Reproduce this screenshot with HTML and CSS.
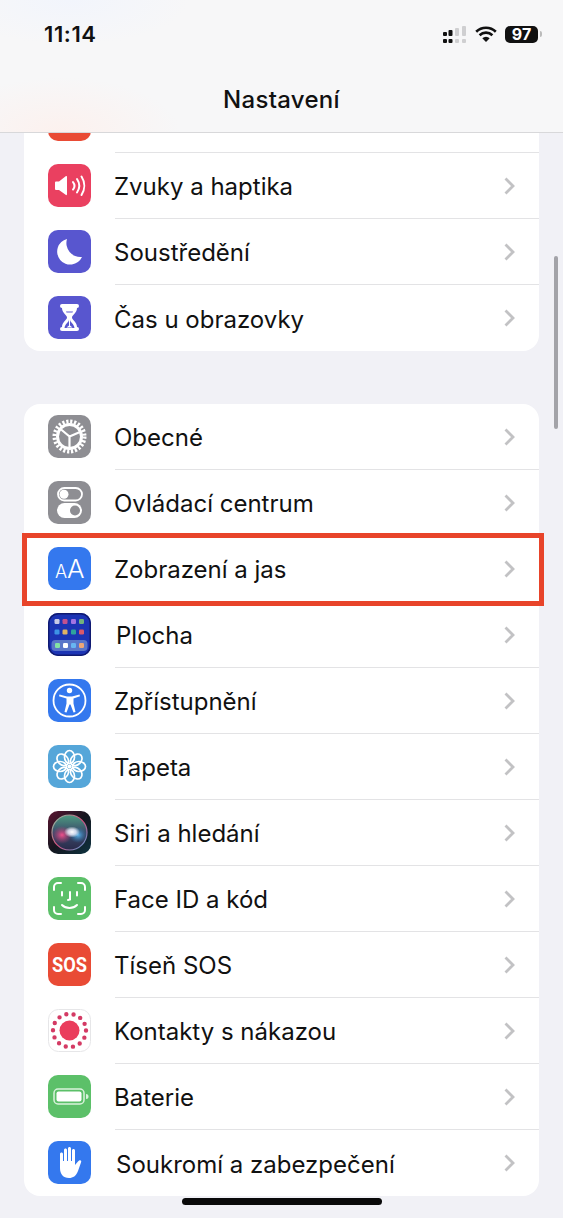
FILE: index.html
```html
<!DOCTYPE html>
<html lang="cs">
<head>
    <meta charset="UTF-8">
    <meta name="viewport" content="width=device-width, initial-scale=1.0">
    <title>Nastavení</title>
    <link rel="stylesheet" href="styles.css">
</head>
<body>
    <div class="screen">
        <!-- Horní lišta -->
        <header class="top-bar">
            <div class="status">
                <span class="time">11:14</span>
                <div class="status-icons">
                    <svg class="signal" width="23" height="17" viewBox="0 0 23 17">
                        <g fill="#111">
                            <rect x="0" y="6" width="4" height="4" rx="1"/>
                            <rect x="0" y="13" width="4" height="4" rx="1"/>
                            <rect x="5.5" y="4" width="4" height="6" rx="1"/>
                            <rect x="5.5" y="13" width="4" height="4" rx="1"/>
                        </g>
                        <g fill="#cfcfd1">
                            <rect x="12" y="2" width="4" height="8" rx="1"/>
                            <rect x="12" y="13" width="4" height="4" rx="1"/>
                            <rect x="19" y="0" width="4" height="10" rx="1"/>
                            <rect x="19" y="13" width="4" height="4" rx="1"/>
                        </g>
                    </svg>
                    <svg class="wifi" width="22" height="16" viewBox="0 0 22 16">
                        <path d="M1.2 5.8a14 14 0 0 1 19.600 0M4.600 9.200a9.200 9.200 0 0 1 12.800 0" fill="none" stroke="#111" stroke-width="2.600"/>
                        <path d="M7.300 12.300a5.200 5.200 0 0 1 7.400 0L11 16z" fill="#111"/>
                    </svg>
                    <div class="battery"><span>97</span></div>
                    <i class="battery-nub"></i>
                </div>
            </div>
            <h1>Nastavení</h1>
        </header>

        <!-- První skupina -->
        <section class="card">
            <div class="row">
                <svg class="icon" viewBox="0 0 43 43"><rect width="43" height="43" rx="10" fill="#e94b35"/></svg>
                <div class="row-body"></div>
            </div>
            <div class="row">
                <svg class="icon" viewBox="0 0 43 43">
                    <rect width="43" height="43" rx="10" fill="#ea4060"/>
                    <path d="M7 18.500q0-1 1-1h3L18 12q1-.5 1 1v17q0 1.500-1 1l-7-5H8q-1 0-1-1z" fill="#fff"/>
                    <path d="M25 18a6 6 0 0 1 0 7.500M29 15a12 12 0 0 1 0 13.500M33.500 12.500a17 17 0 0 1 0 18.500" fill="none" stroke="#fff" stroke-width="2" stroke-linecap="round"/>
                </svg>
                <div class="row-body"><span>Zvuky a haptika</span><svg class="chevron" viewBox="0 0 11 18"><path d="M1.500 1.500 9 9l-7.500 7.500"/></svg></div>
            </div>
            <div class="row">
                <svg class="icon" viewBox="0 0 43 43">
                    <rect width="43" height="43" rx="10" fill="#5856cf"/>
                    <path d="M19 9a13 13 0 1 0 15 18A14 14 0 0 1 19 9z" fill="#fff"/>
                </svg>
                <div class="row-body"><span>Soustředění</span><svg class="chevron" viewBox="0 0 11 18"><path d="M1.500 1.500 9 9l-7.500 7.500"/></svg></div>
            </div>
            <div class="row">
                <svg class="icon" viewBox="0 0 43 43">
                    <rect width="43" height="43" rx="10" fill="#5856cf"/>
                    <path d="M14 8h15q2 0 2 2t-2 2c0 5-5 7-5 9.500s5 4.500 5 9.500q2 0 2 2t-2 2H14q-2 0-2-2t2-2c0-5 5-7 5-9.500S14 17 14 12q-2 0-2-2t2-2z" fill="#fff"/>
                    <path d="M18 15.500h7l-.5 1h-6z" fill="#5856cf"/>
                    <path d="M21 23.500c0 3-4 4-4.500 8.500h10c-.5-4.500-4.500-5.500-4.500-8.500v6l2.500 2h-6l2.500-2z" fill="#5856cf"/>
                </svg>
                <div class="row-body"><span>Čas u obrazovky</span><svg class="chevron" viewBox="0 0 11 18"><path d="M1.500 1.500 9 9l-7.500 7.500"/></svg></div>
            </div>
        </section>

        <!-- Druhá skupina -->
        <section class="card">
            <div class="row">
                <svg class="icon" viewBox="0 0 43 43">
                    <rect width="43" height="43" rx="10" fill="#8e8e93"/>
                    <circle cx="21.500" cy="21.500" r="15" fill="none" stroke="#fff" stroke-width="4" stroke-dasharray="2.200 1.740"/>
                    <circle cx="21.500" cy="21.500" r="12" fill="none" stroke="#fff" stroke-width="3"/>
                    <path d="M21.500 21.500V33M21.500 21.500 12.500 14M21.500 21.500 32 17" stroke="#fff" stroke-width="2.200" fill="none"/>
                </svg>
                <div class="row-body"><span>Obecné</span><svg class="chevron" viewBox="0 0 11 18"><path d="M1.500 1.500 9 9l-7.500 7.500"/></svg></div>
            </div>
            <div class="row">
                <svg class="icon" viewBox="0 0 43 43">
                    <rect width="43" height="43" rx="10" fill="#8e8e93"/>
                    <rect x="10" y="7" width="24" height="12.500" rx="6.250" fill="none" stroke="#fff" stroke-width="1.800"/>
                    <circle cx="16" cy="13.250" r="4.500" fill="#fff"/>
                    <rect x="9" y="22" width="25" height="15" rx="7.500" fill="#fff"/>
                    <circle cx="27" cy="29.500" r="5" fill="#8e8e93"/>
                </svg>
                <div class="row-body"><span>Ovládací centrum</span><svg class="chevron" viewBox="0 0 11 18"><path d="M1.500 1.500 9 9l-7.500 7.500"/></svg></div>
            </div>
            <div class="row">
                <svg class="icon" viewBox="0 0 43 43">
                    <rect width="43" height="43" rx="10" fill="#3478ee"/>
                    <text x="7" y="30.500" class="aa-small">A</text>
                    <text x="19" y="30.500" class="aa-big">A</text>
                </svg>
                <div class="row-body"><span>Zobrazení a jas</span><svg class="chevron" viewBox="0 0 11 18"><path d="M1.500 1.500 9 9l-7.500 7.500"/></svg></div>
                <div class="highlight"></div>
            </div>
            <div class="row">
                <svg class="icon" viewBox="0 0 43 43">
                    <rect width="43" height="43" rx="10" fill="#1c34b4"/>
                    <rect x=".75" y=".75" width="41.500" height="41.500" rx="9.500" fill="none" stroke="#101a70" stroke-width="1.500"/>
                    <rect x="6.500" y="6" width="5" height="5" rx="1.200" fill="#c9c9e6"/>
                    <rect x="14.500" y="6" width="5" height="5" rx="1.200" fill="#c2518e"/>
                    <rect x="23" y="6" width="5" height="5" rx="1.200" fill="#a274e2"/>
                    <rect x="31" y="6" width="5" height="5" rx="1.200" fill="#73b27c"/>
                    <rect x="6.500" y="16.500" width="5" height="5" rx="1.200" fill="#3d93e6"/>
                    <rect x="14.500" y="16.500" width="5" height="5" rx="1.200" fill="#e2b365"/>
                    <rect x="23" y="16.500" width="5" height="5" rx="1.200" fill="#2fa39c"/>
                    <rect x="31" y="16.500" width="5" height="5" rx="1.200" fill="#d9596a"/>
                    <rect x="3.500" y="27" width="36" height="11" rx="4" fill="#5a76c9"/>
                    <rect x="7" y="30" width="5" height="5" rx="1.200" fill="#84e3a3"/>
                    <rect x="15" y="30" width="5" height="5" rx="1.200" fill="#fff"/>
                    <rect x="23" y="30" width="5" height="5" rx="1.200" fill="#68b6f2"/>
                    <rect x="31" y="30" width="5" height="5" rx="1.200" fill="#eda777"/>
                </svg>
                <div class="row-body indent"><span>Plocha</span><svg class="chevron" viewBox="0 0 11 18"><path d="M1.500 1.500 9 9l-7.500 7.500"/></svg></div>
            </div>
            <div class="row">
                <svg class="icon" viewBox="0 0 43 43">
                    <rect width="43" height="43" rx="10" fill="#3478ee"/>
                    <circle cx="21.500" cy="21.500" r="16" fill="none" stroke="#fff" stroke-width="1.800"/>
                    <circle cx="21.500" cy="11.500" r="2.700" fill="#fff"/>
                    <path d="M11.500 15.500 19 17.500h5l7.500-2 .5 1.800-6.500 2.200v5l2 8.500-2 .5-3-8h-1l-3 8-2-.5 2-8.500v-5L11 17.300z" fill="#fff"/>
                </svg>
                <div class="row-body"><span>Zpřístupnění</span><svg class="chevron" viewBox="0 0 11 18"><path d="M1.500 1.500 9 9l-7.500 7.500"/></svg></div>
            </div>
            <div class="row">
                <svg class="icon" viewBox="0 0 43 43">
                    <rect width="43" height="43" rx="10" fill="#55a6d9"/>
                    <g fill="none" stroke="#fff" stroke-width="1.700">
                        <ellipse cx="21.500" cy="12" rx="5" ry="6.500"/>
                        <ellipse cx="21.500" cy="31" rx="5" ry="6.500"/>
                        <ellipse cx="12" cy="21.500" rx="6.500" ry="5"/>
                        <ellipse cx="31" cy="21.500" rx="6.500" ry="5"/>
                        <ellipse cx="21.500" cy="12" rx="5" ry="6.500" transform="rotate(45 21.500 21.500)"/>
                        <ellipse cx="21.500" cy="31" rx="5" ry="6.500" transform="rotate(45 21.500 21.500)"/>
                        <ellipse cx="12" cy="21.500" rx="6.500" ry="5" transform="rotate(45 21.500 21.500)"/>
                        <ellipse cx="31" cy="21.500" rx="6.500" ry="5" transform="rotate(45 21.500 21.500)"/>
                    </g>
                    <circle cx="21.500" cy="21.500" r="2" fill="#fff"/>
                </svg>
                <div class="row-body"><span>Tapeta</span><svg class="chevron" viewBox="0 0 11 18"><path d="M1.500 1.500 9 9l-7.500 7.500"/></svg></div>
            </div>
            <div class="row">
                <svg class="icon" viewBox="0 0 43 43">
                    <defs>
                        <linearGradient id="siriBg" x1="0" y1="0" x2="1" y2="1">
                            <stop offset="0" stop-color="#5a1530"/>
                            <stop offset=".5" stop-color="#14161f"/>
                            <stop offset="1" stop-color="#0e3340"/>
                        </linearGradient>
                        <linearGradient id="siriOrb" x1="0" y1="0" x2="0" y2="1">
                            <stop offset="0" stop-color="#4d9b80"/>
                            <stop offset=".5" stop-color="#3a4a6a"/>
                            <stop offset="1" stop-color="#2a2a4a"/>
                        </linearGradient>
                        <linearGradient id="siriRim" x1="0" y1="0" x2="1" y2="1">
                            <stop offset="0" stop-color="#7fd0a8"/>
                            <stop offset=".5" stop-color="#d9507f"/>
                            <stop offset="1" stop-color="#4fa0d8"/>
                        </linearGradient>
                        <radialGradient id="siriRed"><stop offset="0" stop-color="#f0508c"/><stop offset="1" stop-color="#c03a70" stop-opacity="0"/></radialGradient>
                        <radialGradient id="siriBlue"><stop offset="0" stop-color="#5fb4ec"/><stop offset="1" stop-color="#2a7ab0" stop-opacity="0"/></radialGradient>
                        <radialGradient id="siriCore"><stop offset="0" stop-color="#fff"/><stop offset=".5" stop-color="#f0f0ff" stop-opacity=".8"/><stop offset="1" stop-color="#fff" stop-opacity="0"/></radialGradient>
                    </defs>
                    <rect width="43" height="43" rx="10" fill="url(#siriBg)"/>
                    <circle cx="21.500" cy="21.500" r="17.500" fill="url(#siriOrb)" stroke="url(#siriRim)" stroke-width="1.200"/>
                    <ellipse cx="14" cy="24" rx="10" ry="9" fill="url(#siriRed)"/>
                    <ellipse cx="30" cy="24" rx="9" ry="8" fill="url(#siriBlue)"/>
                    <ellipse cx="24" cy="21" rx="8" ry="5.500" fill="url(#siriCore)"/>
                </svg>
                <div class="row-body"><span>Siri a hledání</span><svg class="chevron" viewBox="0 0 11 18"><path d="M1.500 1.500 9 9l-7.500 7.500"/></svg></div>
            </div>
            <div class="row">
                <svg class="icon" viewBox="0 0 43 43">
                    <rect width="43" height="43" rx="10" fill="#5cc069"/>
                    <g fill="none" stroke="#fff" stroke-width="2" stroke-linecap="round">
                        <path d="M6 13V10a4 4 0 0 1 4-4h3M30 6h3a4 4 0 0 1 4 4v3M37 30v3a4 4 0 0 1-4 4h-3M13 37h-3a4 4 0 0 1-4-4v-3"/>
                        <path d="M14 15v3.500M29 15v3.500M22 15v7.500l-2 .5M14 28c4 4 11 4 15 0"/>
                    </g>
                </svg>
                <div class="row-body"><span>Face ID a kód</span><svg class="chevron" viewBox="0 0 11 18"><path d="M1.500 1.500 9 9l-7.500 7.500"/></svg></div>
            </div>
            <div class="row">
                <svg class="icon" viewBox="0 0 43 43">
                    <rect width="43" height="43" rx="10" fill="#e94b35"/>
                    <text x="21.500" y="28.500" class="sos" textLength="35" lengthAdjust="spacingAndGlyphs">SOS</text>
                </svg>
                <div class="row-body"><span>Tíseň SOS</span><svg class="chevron" viewBox="0 0 11 18"><path d="M1.500 1.500 9 9l-7.500 7.500"/></svg></div>
            </div>
            <div class="row">
                <svg class="icon" viewBox="0 0 43 43">
                    <rect x=".5" y=".5" width="42" height="42" rx="10" fill="#fff" stroke="#e6e6e8"/>
                    <circle cx="21.500" cy="21.500" r="10" fill="#ea3d5c"/>
                    <circle cx="21.500" cy="21.500" r="16.500" fill="none" stroke="#d43a64" stroke-width="4.400" stroke-linecap="round" stroke-dasharray="0 7.400"/>
                </svg>
                <div class="row-body"><span>Kontakty s nákazou</span><svg class="chevron" viewBox="0 0 11 18"><path d="M1.500 1.500 9 9l-7.500 7.500"/></svg></div>
            </div>
            <div class="row">
                <svg class="icon" viewBox="0 0 43 43">
                    <rect width="43" height="43" rx="10" fill="#5cc069"/>
                    <rect x="6" y="14" width="30" height="15" rx="4" fill="none" stroke="#d9f2dc" stroke-width="1.500"/>
                    <rect x="8.500" y="16.500" width="25" height="10" rx="2" fill="#fff"/>
                    <path d="M38 19v5a2.500 2.500 0 0 0 0-5z" fill="#d9f2dc"/>
                </svg>
                <div class="row-body"><span>Baterie</span><svg class="chevron" viewBox="0 0 11 18"><path d="M1.500 1.500 9 9l-7.500 7.500"/></svg></div>
            </div>
            <div class="row">
                <svg class="icon" viewBox="0 0 43 43">
                    <rect width="43" height="43" rx="10" fill="#3478ee"/>
                    <path d="M12 13c0-2 3-2 3 0v7h1V9c0-2 3-2 3 0v11h1V7.500c0-2 3-2 3 0V20h1V9.500c0-2 3-2 3 0V24l3-3.500c2-2.500 4-1 3 1L30 30c-2 5-5 7-9 7-6 0-9-4-9-10z" fill="#fff"/>
                </svg>
                <div class="row-body indent"><span>Soukromí a zabezpečení</span><svg class="chevron" viewBox="0 0 11 18"><path d="M1.500 1.500 9 9l-7.500 7.500"/></svg></div>
            </div>
        </section>

        <div class="scrollbar"></div>
        <div class="home-indicator"></div>
    </div>
</body>
</html>
```

FILE: styles.css
```css
* {
    margin: 0;
    padding: 0;
    box-sizing: border-box;
}

body {
    font-family: 'Inter', 'Liberation Sans', sans-serif;
    background-color: #f1f1f6;
    color: #111;
}

.screen {
    position: relative;
    height: 1218px;
    overflow: hidden;
    padding: 87px 24px 0;
    display: flex;
    flex-direction: column;
    gap: 53px;
}

/* Top bar */
.top-bar {
    position: absolute;
    top: 0;
    left: 0;
    width: 100%;
    height: 133px;
    z-index: 5;
    border-bottom: 1px solid #d8d8da;
    background:
        radial-gradient(ellipse 120px 55px at 60px 132px, #fcf1ee, transparent),
        radial-gradient(ellipse 120px 45px at 70px 0, #f2f5fc, transparent),
        #f7f7f8;
}

.status {
    display: flex;
    justify-content: space-between;
    align-items: center;
    height: 40px;
    margin-top: 14px;
    padding: 0 21px 0 44px;
}

.time {
    font-size: 22px;
    font-weight: 600;
    letter-spacing: 0.6px;
}

.status-icons {
    display: flex;
    align-items: center;
}

.signal {
    margin-right: 9px;
}

.wifi {
    margin-right: 8px;
}

.battery {
    width: 33px;
    height: 17px;
    background-color: #111;
    border-radius: 5px;
    color: #fff;
    font-size: 16px;
    font-weight: 700;
    line-height: 17px;
    text-align: center;
}

.battery-nub {
    width: 2px;
    height: 6px;
    margin-left: 2px;
    background-color: #bbb;
    border-radius: 0 2px 2px 0;
}

h1 {
    margin-top: 23px;
    font-size: 24px;
    font-weight: 500;
    letter-spacing: 0.3px;
    line-height: 46px;
    text-align: center;
}

/* Cards */
.card {
    background-color: #fff;
    border-radius: 16px;
}

.row {
    position: relative;
    display: flex;
    align-items: center;
    height: 66px;
    padding-left: 24px;
}

.icon {
    flex-shrink: 0;
    width: 43px;
    height: 43px;
    margin-bottom: 1px;
}

.row-body {
    flex: 1;
    height: 100%;
    margin-left: 24px;
    padding-right: 24px;
    display: flex;
    align-items: center;
    justify-content: space-between;
    border-bottom: 1px solid #e3e3e5;
    font-size: 24px;
}

.row-body span {
    margin-left: -1px;
    padding-top: 2px;
}

.row:last-child .row-body {
    border-bottom: none;
}

.row-body.indent span {
    margin-left: 1px;
}

.chevron {
    width: 11px;
    height: 18px;
    fill: none;
    stroke: #c2c2c4;
    stroke-width: 2.8;
}

.aa-small {
    font-size: 18px;
    font-weight: 300;
    fill: #fff;
}

.aa-big {
    font-size: 26px;
    font-weight: 300;
    fill: #fff;
}

.sos {
    font-family: 'Roboto', sans-serif;
    font-size: 20px;
    font-weight: 700;
    fill: #fff;
    text-anchor: middle;
}

/* Overlays */
.highlight {
    position: absolute;
    top: -3px;
    bottom: -4px;
    left: -2px;
    right: -5px;
    border: 5px solid #e8442a;
}

.scrollbar {
    position: absolute;
    top: 256px;
    right: 5px;
    width: 4px;
    height: 173px;
    background-color: #a3a3a8;
    border-radius: 2px;
}

.home-indicator {
    position: absolute;
    left: 182px;
    bottom: 13px;
    width: 200px;
    height: 7px;
    background-color: #0a0a0a;
    border-radius: 4px;
}
```
